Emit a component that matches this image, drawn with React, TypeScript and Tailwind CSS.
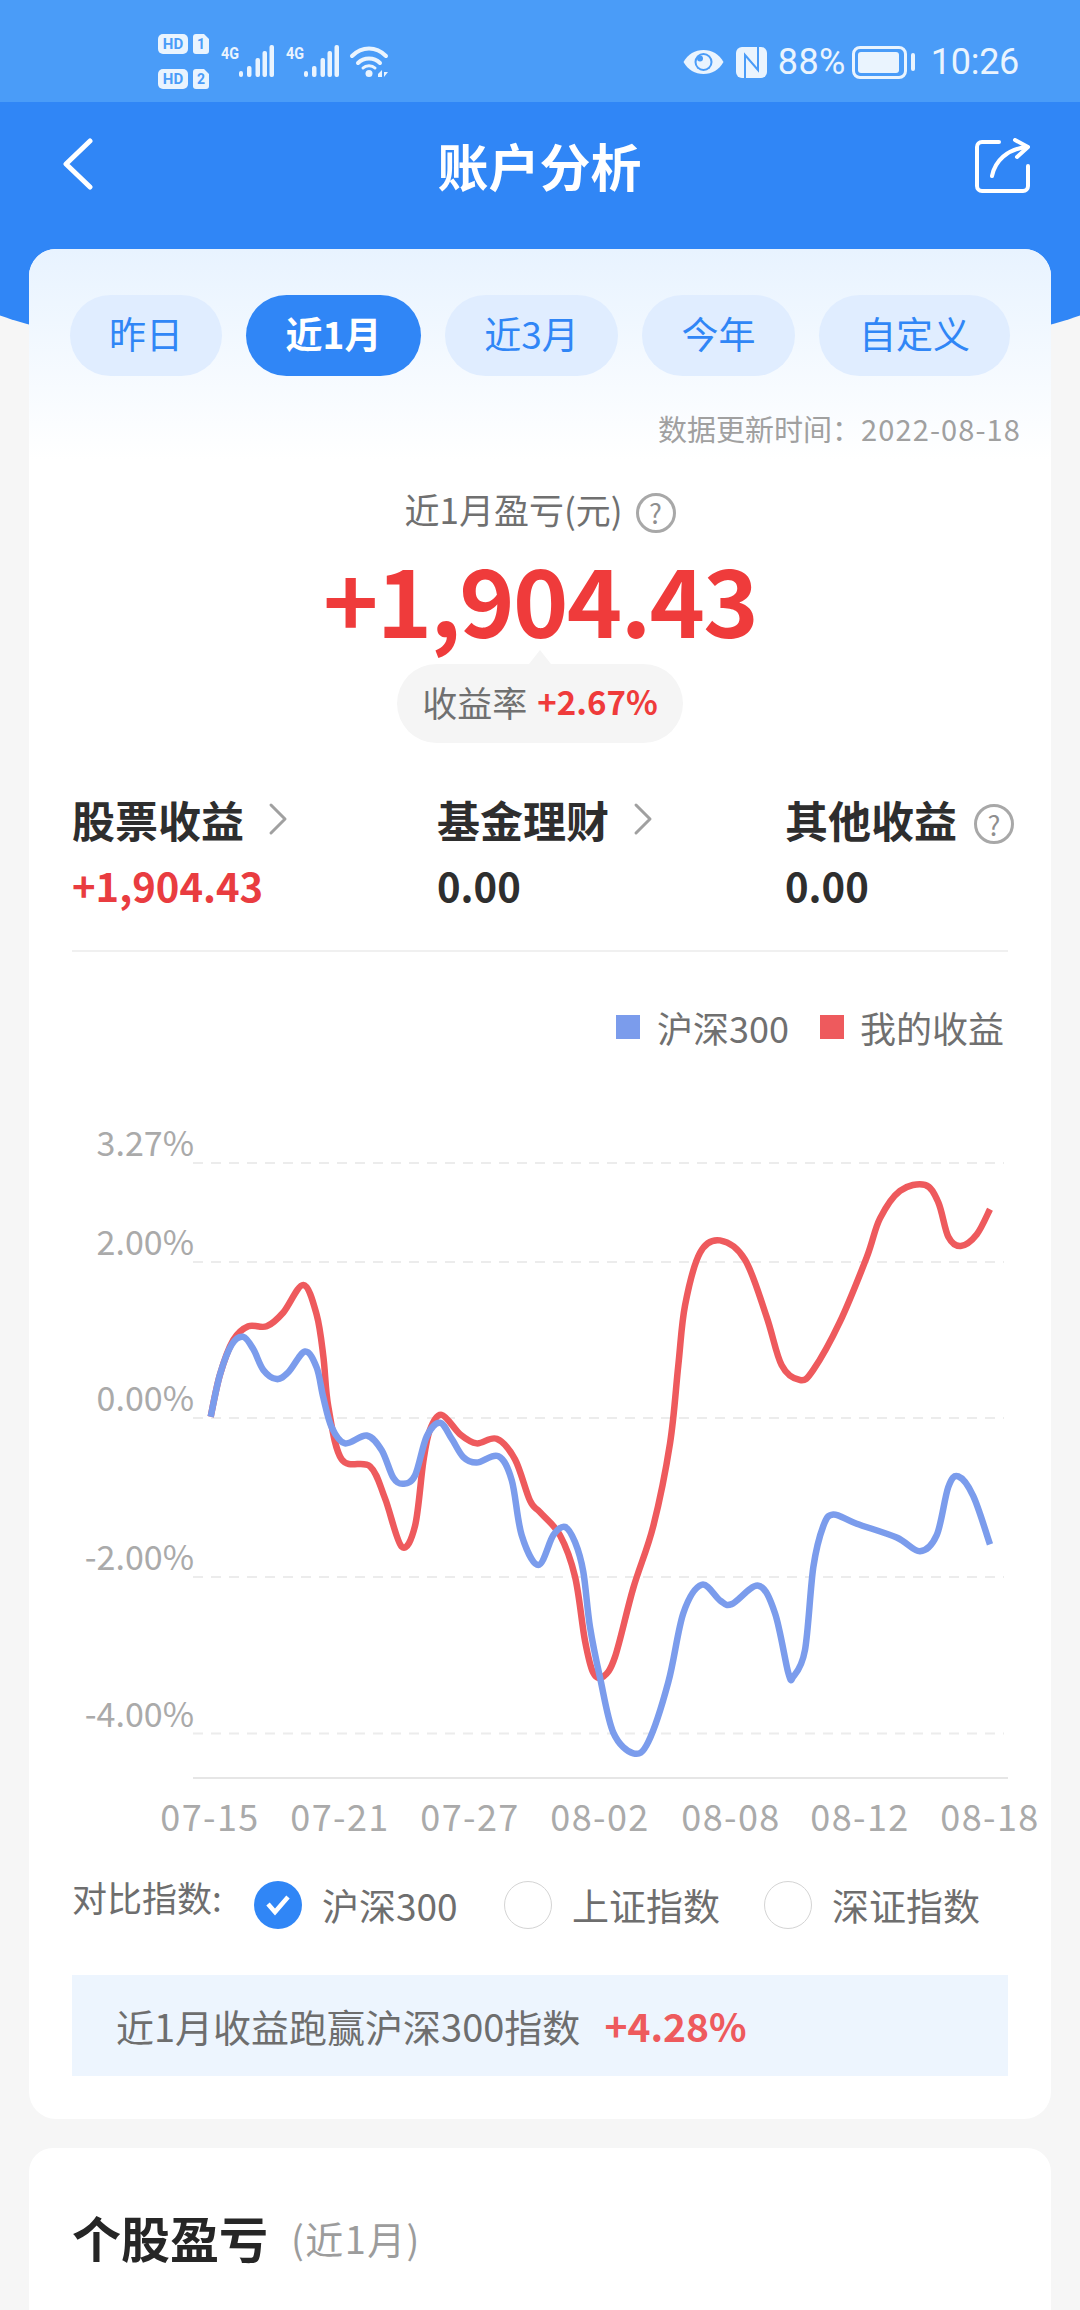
import React from 'react';

const font = 'font-["Noto_Sans_CJK_SC","Noto_Sans",sans-serif]';

// traced from the reference, in page pixels
const trace = (pts: number[][], ox: number) => pts.map(([x, y]) => [ox + x / 3, 1100 + y / 2.178]);

const bluePts = [
  ...trace([[452,692],[480,600],[515,535],[550,518],[580,545],[610,590],[650,610],[685,595],[735,550],[770,585],[790,650],[815,715],[855,750],[920,733],[965,765],[1000,825],[1030,838],[1065,820],[1100,735],[1140,705],[1175,740],[1210,780],[1250,792],[1315,778],[1355,830],[1385,950],[1435,1015]], 60),
  ...trace([[40,950],[75,932],[105,965],[130,1030],[150,1150],[180,1260],[220,1380],[280,1425],[325,1400],[385,1270],[430,1120],[485,1058],[540,1092],[575,1100],[655,1060],[705,1120],[745,1250],[760,1258],[795,1200],[820,1020],[850,930],[880,905],[950,925],[1070,955],[1140,985],[1190,950],[1225,845],[1255,822],[1300,865],[1350,970]], 540),
];

const redPts = [
  ...trace([[452,692],[480,600],[520,525],[565,495],[620,495],[670,465],[730,405],[770,470],[790,560],[805,670],[845,785],[930,800],[975,870],[1025,975],[1065,930],[1090,790],[1110,720],[1145,688],[1200,730],[1250,750],[1310,740],[1365,785],[1410,875]], 60),
  ...trace([[0,900],[60,950],[105,1040],[135,1180],[160,1250],[190,1258],[225,1215],[280,1065],[340,930],[390,750],[415,580],[435,450],[480,335],[540,308],[615,350],[680,475],[725,580],[780,612],[820,590],[900,485],[980,345],[1020,260],[1080,200],[1155,187],[1195,225],[1225,300],[1262,320],[1310,295],[1350,240]], 540),
];

const smooth = (p: number[][]) => {
  let d = `M${p[0][0].toFixed(1)} ${p[0][1].toFixed(1)}`;
  for (let i = 0; i < p.length - 1; i++) {
    const a = p[Math.max(i - 1, 0)], b = p[i], c = p[i + 1], e = p[Math.min(i + 2, p.length - 1)];
    d += ` C${(b[0] + (c[0] - a[0]) / 6).toFixed(1)} ${(b[1] + (c[1] - a[1]) / 6).toFixed(1)} ${(c[0] - (e[0] - b[0]) / 6).toFixed(1)} ${(c[1] - (e[1] - b[1]) / 6).toFixed(1)} ${c[0].toFixed(1)} ${c[1].toFixed(1)}`;
  }
  return d;
};

const CHART_TOP = 1100;
const CHART_LEFT = 72;
const CHART_FONT = '"Noto Sans CJK SC", sans-serif';

const grid = [
  { y: 1164, label: '3.27%' },
  { y: 1263, label: '2.00%' },
  { y: 1419, label: '0.00%' },
  { y: 1578, label: '-2.00%' },
  { y: 1734.5, label: '-4.00%' },
];
const xLabels = [
  { x: 210, t: '07-15' }, { x: 340, t: '07-21' }, { x: 470, t: '07-27' }, { x: 600, t: '08-02' },
  { x: 731, t: '08-08' }, { x: 860, t: '08-12' }, { x: 990, t: '08-18' },
];

const Chart = () => (
  <svg width="980" height="750" viewBox={`${CHART_LEFT} ${CHART_TOP} 980 750`} className="block overflow-visible">
    {grid.map(g => (
      <g key={g.label}>
        <line x1="193" x2="1004" y1={g.y} y2={g.y} stroke="#ececec" strokeWidth="2" strokeDasharray="10 8" />
        <text x="194" y={g.y - 7} textAnchor="end" fontSize="34" fill="#aaaaaa" fontFamily={CHART_FONT}>{g.label}</text>
      </g>
    ))}
    <line x1="193" x2="1008" y1="1779" y2="1779" stroke="#e6e6e6" strokeWidth="2" />
    {xLabels.map(l => (
      <text key={l.t} x={l.x} y="1832" textAnchor="middle" fontSize="36" letterSpacing="1.4" fill="#aaaaaa" fontFamily={CHART_FONT}>{l.t}</text>
    ))}
    <path d={smooth(redPts)} fill="none" stroke="#ee5a5d" strokeWidth="6.5" />
    <path d={smooth(bluePts)} fill="none" stroke="#7b9cec" strokeWidth="6.5" />
  </svg>
);

const Help = ({ size }: { size: number }) => (
  <span
    className="inline-flex items-center justify-center rounded-full border-[3px] border-[#a8a8a8] leading-none text-[#8f8f8f]"
    style={{ width: size, height: size, fontSize: size * 0.68 }}
  >
    ?
  </span>
);

const Chevron = () => (
  <svg width="20" height="34" viewBox="0 0 20 34" fill="none" stroke="#a0a0a0" strokeWidth="3" strokeLinecap="round" strokeLinejoin="round">
    <path d="M3 3l14 14L3 31" />
  </svg>
);

const StatusLeft = () => (
  <svg width="232" height="60" viewBox="158 32 232 60" fill="#eaf4fe">
    <rect x="158" y="34" width="30" height="20" rx="5" />
    <text x="173" y="49" textAnchor="middle" fontSize="15" fontWeight="700" fill="#4a9cf8" fontFamily="Roboto, sans-serif">HD</text>
    <path d="M196 34h8l5 5v12a3 3 0 0 1-3 3h-10a3 3 0 0 1-3-3V37a3 3 0 0 1 3-3z" />
    <text x="201" y="49" textAnchor="middle" fontSize="14" fontWeight="700" fill="#4a9cf8" fontFamily="Roboto, sans-serif">1</text>
    <rect x="158" y="69" width="30" height="20" rx="5" />
    <text x="173" y="84" textAnchor="middle" fontSize="15" fontWeight="700" fill="#4a9cf8" fontFamily="Roboto, sans-serif">HD</text>
    <path d="M196 69h8l5 5v12a3 3 0 0 1-3 3h-10a3 3 0 0 1-3-3V72a3 3 0 0 1 3-3z" />
    <text x="201" y="84" textAnchor="middle" fontSize="14" fontWeight="700" fill="#4a9cf8" fontFamily="Roboto, sans-serif">2</text>
    {[0, 65].map(dx => (
      <g key={dx} transform={`translate(${dx} 0)`}>
        <text x="221" y="59" fontSize="17" fontWeight="700" fontFamily="Roboto, sans-serif" textLength="18" lengthAdjust="spacingAndGlyphs">4G</text>
        <rect x="239" y="71" width="4" height="6" rx="2" />
        <rect x="247" y="66" width="4.5" height="11" rx="2" />
        <rect x="255.5" y="58" width="4.5" height="19" rx="2" />
        <rect x="269.5" y="45" width="4.5" height="32" rx="2" />
        <rect x="262.5" y="51" width="4.5" height="26" rx="2" />
      </g>
    ))}
    <g fill="none" stroke="#eaf4fe" strokeWidth="4" strokeLinecap="round">
      <path d="M352 56c10-10 24-10 34 0" />
      <path d="M358 63c6-6 16-6 22 0" />
      <path d="M363 68c3-3 9-3 12 0" strokeWidth="3" />
    </g>
    <circle cx="369" cy="73.5" r="3.5" />
    <path d="M378 77v-3l4-4v7z M384 69v8l4-5h-4z" />
  </svg>
);

const StatusRight = () => (
  <div className="flex items-center">
    <svg width="41" height="26" viewBox="0 0 41 26" fill="#eaf4fe">
      <path d="M0.5 13C5 5 12 1 20.5 1S36 5 40.5 13C36 21 29 25 20.5 25S5 21 0.5 13z" />
      <circle cx="20.5" cy="13" r="9" fill="#4a9cf8" />
      <circle cx="20.5" cy="13" r="7" />
      <circle cx="17" cy="9.5" r="3" fill="#4a9cf8" />
    </svg>
    <svg width="31" height="31" viewBox="0 0 31 31" fill="#eaf4fe" className="ml-3">
      <rect width="31" height="31" rx="6" />
      <path d="M9 31V8l13 15V0" fill="none" stroke="#4a9cf8" strokeWidth="2" />
    </svg>
    <span className="ml-[11px] w-[65px] text-[36px] leading-none tracking-[0.3px] font-['Roboto'] text-[#eaf4fe]">88%</span>
    <div className="ml-[9px] flex h-[33px] w-[55px] items-center rounded-[8px] border-[3px] border-[#eaf4fe] p-[3px]">
      <div className="h-full w-[41px] rounded-[3px] bg-[#eaf4fe]" />
    </div>
    <div className="ml-[4px] h-[18px] w-[4px] rounded-full bg-[#eaf4fe]" />
    <span className="ml-[16px] text-[36px] leading-none tracking-[-0.3px] font-['Roboto'] text-[#eaf4fe]">10:26</span>
  </div>
);

const tabs = [
  { t: '昨日', w: 'w-[152px]' },
  { t: '近1月', w: 'w-[175px]', active: true },
  { t: '近3月', w: 'w-[173px]' },
  { t: '今年', w: 'w-[153px]' },
  { t: '自定义', w: 'w-[191px]' },
];

const stats = [
  { t: '股票收益', v: '+1,904.43', w: 'w-[365px] shrink-0', red: true, chevron: true },
  { t: '基金理财', v: '0.00', w: 'w-[348px] shrink-0', chevron: true },
  { t: '其他收益', v: '0.00', help: true },
];

const radios = [
  { t: '沪深300', on: true, w: 'w-[250px]' },
  { t: '上证指数', w: 'w-[260px]' },
  { t: '深证指数' },
];

export default function App() {
  return (
    <div className={`${font} relative h-[2310px] w-[1080px] overflow-hidden bg-[#f6f6f6]`}>
      {/* blue backdrop with the curved bottom, sits behind the first card */}
      <div className="absolute -left-[60px] top-0 h-[372px] w-[1200px] rounded-b-[600px_100px] bg-[#3086f6]" />

      <div className="relative">
        <div className="flex h-[102px] items-center justify-between bg-[#4a9cf8] pl-[158px] pr-[61px] pt-[22px]">
          <StatusLeft />
          <StatusRight />
        </div>

        <div className="flex h-[147px] items-start pl-[62px] pr-[50px] pt-[36px]">
          <div className="flex-1">
            <svg width="34" height="52" viewBox="0 0 34 52" fill="none" stroke="#fff" strokeWidth="5" strokeLinecap="round" strokeLinejoin="round">
              <path d="M28 3L4 26l24 23" />
            </svg>
          </div>
          <h1 className="mr-[13px] -mt-[1px] text-[51px] leading-[56px] font-bold text-white">账户分析</h1>
          <div className="flex flex-1 justify-end">
            <svg width="56" height="56" viewBox="0 0 56 56" fill="none" stroke="#fff" strokeWidth="4" strokeLinecap="round" strokeLinejoin="round">
              <path d="M25 4H8a5 5 0 0 0-5 5v39a5 5 0 0 0 5 5h41a5 5 0 0 0 5-5V28" />
              <path d="M18 38c3-15 15-27 35-29" />
              <path d="M41 2l13 7-11 10" />
            </svg>
          </div>
        </div>

        <div className="mx-[29px] h-[1870px] rounded-[27px] bg-white">
          <div className="h-[211px] rounded-t-[27px] bg-gradient-to-b from-[#e8f3ff] to-white px-[41px] pt-[46px]">
            <div className="flex justify-between">
              {tabs.map(tab => (
                <div
                  key={tab.t}
                  className={`flex h-[81px] items-center justify-center rounded-full pb-[4px] text-[37px] ${tab.w} ${tab.active ? 'bg-[#3086f6] font-bold text-white' : 'bg-[#e0edff] text-[#3086f6]'}`}
                >
                  {tab.t}
                </div>
              ))}
            </div>
            <div className="-mr-[11px] mt-[32px] flex justify-end text-[29px] leading-[40px] text-[#a0a0a0]">
              <span>数据更新时间：</span>
              <span className="tracking-[1.1px]">2022-08-18</span>
            </div>
          </div>

          <div className="flex flex-col items-center">
            <div className="mt-[19px] flex items-center text-[35px] leading-[60px] text-[#707070]">
              近1月盈亏(元)
              <span className="ml-[13px]"><Help size={40} /></span>
            </div>
            <div className="mt-[3px] text-[94px] leading-[110px] font-bold tracking-[-1.7px] text-[#ef3b3b]">+1,904.43</div>
            <div className="relative mt-[12px] flex h-[79px] w-[286px] items-center justify-center rounded-full bg-[#f5f5f5] pb-[3px] text-[35px]">
              <div className="absolute -top-[14px] left-1/2 h-0 w-0 -translate-x-1/2 border-x-[11px] border-b-[14px] border-x-transparent border-b-[#f5f5f5]" />
              <span className="text-[#707070]">收益率</span>
              <span className="ml-[10px] text-[33px] font-bold text-[#ef3b3b]">+2.67%</span>
            </div>
          </div>

          <div className="mx-[43px] mt-[46px] flex border-b-2 border-[#f0f0f0] pb-[40px]">
            {stats.map(s => (
              <div key={s.t} className={s.w}>
                <div className="flex h-[60px] items-center text-[43px] font-bold whitespace-nowrap text-[#2e2e2e]">
                  {s.t}
                  {s.chevron && <span className="ml-[24px]"><Chevron /></span>}
                  {s.help && <span className="ml-[17px] -mt-[4px] font-normal"><Help size={40} /></span>}
                </div>
                <div className={`mt-[11px] text-[40px] leading-[50px] font-bold ${s.red ? 'text-[#e93c40]' : 'text-[#2e2e2e]'}`}>{s.v}</div>
              </div>
            ))}
          </div>

          <div className="mr-[47px] mt-[50px] flex items-center justify-end text-[36px] leading-[50px] text-[#707070]">
            <div className="h-[24px] w-[24px] bg-[#7b9cec]" />
            <span className="ml-[17px]">沪深300</span>
            <div className="ml-[31px] h-[24px] w-[24px] bg-[#ee5a5d]" />
            <span className="ml-[16px]">我的收益</span>
          </div>

          <div className="ml-[43px] mt-[47px]">
            <Chart />
          </div>

          <div className="mx-[43px] mt-[32px] flex items-start">
            <div className="-mt-[7px] w-[182px] text-[35px] leading-[46px] text-[#6e6e6e]">对比指数:</div>
            <div className="flex items-center">
              {radios.map(r => (
                <div key={r.t} className={`flex items-center ${r.w ?? ''}`}>
                  {r.on ? (
                    <div className="flex h-[48px] w-[48px] items-center justify-center rounded-full bg-[#3086f6]">
                      <svg width="28" height="22" viewBox="0 0 28 22" fill="none" stroke="#fff" strokeWidth="4.5"><path d="M4 10l7 8L24 3" /></svg>
                    </div>
                  ) : (
                    <div className="h-[48px] w-[48px] rounded-full border border-[#d4d4d4]" />
                  )}
                  <span className="ml-[20px] text-[37px] leading-[48px] text-[#6e6e6e]">{r.t}</span>
                </div>
              ))}
            </div>
          </div>

          <div className="mx-[43px] mt-[46px] flex h-[101px] items-center bg-[#edf5fe] pl-[44px]">
            <span className="text-[38px] text-[#6e6e6e]">近1月收益跑赢沪深300指数</span>
            <span className="ml-[24px] text-[39px] font-bold text-[#ee5a5d]">+4.28%</span>
          </div>
        </div>

        <div className="mx-[29px] mt-[29px] h-[300px] rounded-[24px] bg-white px-[43px] pt-[56px]">
          <div className="flex items-center">
            <span className="text-[49px] leading-[66px] font-bold text-[#262626]">个股盈亏</span>
            <span className="ml-[23px] text-[38px] tracking-[1.4px] text-[#9c9c9c]">(近1月)</span>
          </div>
        </div>
      </div>
    </div>
  );
}
